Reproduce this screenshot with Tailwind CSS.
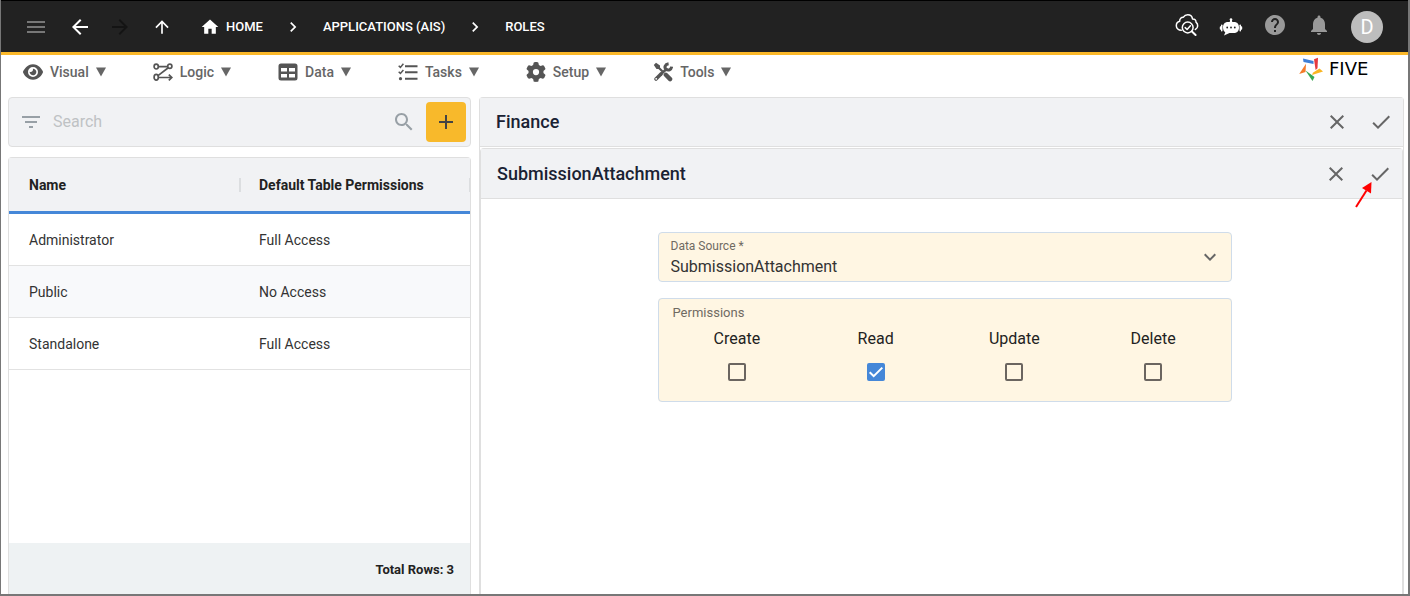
<!DOCTYPE html>
<html lang="en">
<head>
<meta charset="utf-8">
<meta name="viewport" content="width=device-width, initial-scale=1">
<title>Roles</title>
<script src="https://cdn.jsdelivr.net/npm/@tailwindcss/browser@4"></script>
</head>
<body class="bg-white font-['Roboto','Liberation_Sans',sans-serif] text-[#222]">
<div class="flex min-h-screen flex-col border-r-2 border-b-2 border-l border-[#777]">
  <header class="flex h-[55px] items-center border-t border-b-3 border-t-black border-b-[#fbb829] bg-[#222] pt-px pr-[25px] pl-[23px] text-[13px] font-medium text-white">
    <button aria-label="Menu" class="text-[#777]"><svg class="size-6" viewBox="0 0 24 24" fill="currentColor"><path d="M3 18h18v-2H3v2zm0-5h18v-2H3v2zm0-7v2h18V6H3z"/></svg></button>
    <button aria-label="Back" class="ml-5"><svg class="size-6" viewBox="0 0 24 24" fill="currentColor"><path d="M20 11H7.830l5.590-5.590L12 4l-8 8 8 8 1.410-1.410L7.830 13H20v-2z"/></svg></button>
    <button aria-label="Forward" disabled class="ml-4 text-[#141414]"><svg class="size-6" viewBox="0 0 24 24" fill="currentColor"><path d="M12 4l-1.410 1.410L16.170 11H4v2h12.170l-5.580 5.590L12 20l8-8z"/></svg></button>
    <button aria-label="Up" class="ml-5"><svg class="size-5" viewBox="0 0 24 24" fill="currentColor"><path d="M4 12l1.410 1.410L11 7.830V20h2V7.830l5.580 5.590L20 12l-8-8-8 8z"/></svg></button>
    <nav class="ml-7 flex items-center" aria-label="Breadcrumb">
      <a href="#" class="flex items-center gap-1.5"><svg class="size-5" viewBox="0 0 24 24" fill="currentColor"><path d="M10 20v-6h4v6h5v-8h3L12 3 2 12h3v8z"/></svg>HOME</a>
      <svg class="mx-5 size-5" viewBox="0 0 24 24" fill="currentColor"><path d="M10 6 8.590 7.410 13.170 12l-4.580 4.590L10 18l6-6z"/></svg>
      <a href="#">APPLICATIONS (AIS)</a>
      <svg class="mx-5 size-5" viewBox="0 0 24 24" fill="currentColor"><path d="M10 6 8.590 7.410 13.170 12l-4.580 4.590L10 18l6-6z"/></svg>
      <a href="#">ROLES</a>
    </nav>
    <div class="ml-auto flex items-center gap-5">
      <button aria-label="Inspect"><svg class="-mt-1 size-6" viewBox="0 0 24 24" fill="none" stroke="currentColor" stroke-width="1.500" stroke-linecap="round" stroke-linejoin="round"><path d="M6.300 17.300C3.500 17.300 1.300 15.300 1.300 12.700c0-2.300 1.400-3.900 3.400-4.400C4.400 5.600 6.400 4 8.400 4.200 9.400 2.600 11 1.800 12.700 1.800c2.700 0 4.500 1.700 4.800 4.100 2.200-.2 3.700 1.300 3.500 3.300 2.400 1.900 2.300 5.800-.7 7.300"/><circle cx="12.700" cy="14.500" r="5.400"/><path d="m10.200 14.600 1.900 1.900 3.300-3.800"/><path d="m16.900 18.500 3.700 3.500" stroke-width="2"/></svg></button>
      <button aria-label="Assistant"><svg class="size-6" viewBox="0 0 24 24" fill="currentColor"><path d="M12 3.200a1.300 1.300 0 0 1 .9 2.300l.4 1.500h1.700c3.300 0 5 2.200 5 5.500S18.300 18 15 18h-4.500L5 20.500l1.300-3.200C4.900 16.400 4 14.800 4 12.500 4 9.200 5.700 7 9 7h1.700l.4-1.500A1.300 1.300 0 0 1 12 3.200z"/><rect x="2" y="9.500" width="1.500" height="7" rx=".7"/><rect x="20.500" y="9.500" width="1.500" height="7" rx=".7"/><rect x=".8" y="11.200" width="1.800" height="3.600" rx=".7"/><rect x="21.400" y="11.200" width="1.800" height="3.600" rx=".7"/><g fill="#222"><circle cx="8.200" cy="12.500" r=".9"/><circle cx="12" cy="12.500" r=".9"/><circle cx="15.800" cy="12.500" r=".9"/></g></svg></button>
      <button aria-label="Help" class="text-[#999]"><svg class="-mt-1 size-6" viewBox="0 0 24 24" fill="currentColor"><path d="M12 2C6.480 2 2 6.480 2 12s4.480 10 10 10 10-4.480 10-10S17.520 2 12 2zm1 17h-2v-2h2v2zm2.070-7.750l-.9.920C13.450 12.900 13 13.500 13 15h-2v-.5c0-1.100.450-2.100 1.170-2.830l1.240-1.260c.370-.360.590-.860.590-1.410 0-1.100-.9-2-2-2s-2 .9-2 2H8c0-2.210 1.790-4 4-4s4 1.790 4 4c0 .880-.360 1.680-.930 2.250z"/></svg></button>
      <button aria-label="Notifications" class="text-[#999]"><svg class="-mt-1 size-6" viewBox="0 0 24 24" fill="currentColor"><path d="M12 22c1.100 0 2-.9 2-2h-4c0 1.100.890 2 2 2zm6-6v-5c0-3.070-1.640-5.640-4.500-6.320V4c0-.830-.670-1.500-1.500-1.500s-1.500.670-1.500 1.500v.680C7.630 5.360 6 7.920 6 11v5l-2 2v1h16v-1l-2-2z"/></svg></button>
      <button aria-label="Account" class="size-8 rounded-full bg-[#bdbdbd] text-xl font-normal">D</button>
    </div>
  </header>

  <div class="flex h-[42px] items-start pr-[19px] pl-[22px] text-[#666]">
    <nav class="flex h-[33px] items-center gap-[47px] text-sm font-medium" aria-label="Main">
      <button class="flex items-center gap-[7px]"><svg class="h-5 w-5 text-[#555]" viewBox="0 0 576 512" fill="currentColor"><path d="M288 32c-80.800 0-145.500 36.800-192.600 80.600C48.600 156 17.300 208 2.500 243.700c-3.300 7.900-3.300 16.700 0 24.600C17.300 304 48.600 356 95.400 399.400 142.500 443.200 207.200 480 288 480s145.500-36.800 192.600-80.600c46.800-43.500 78.100-95.400 93-131.100 3.300-7.900 3.300-16.700 0-24.600-14.900-35.700-46.200-87.700-93-131.100C433.500 68.800 368.800 32 288 32zM144 256a144 144 0 1 1 288 0 144 144 0 1 1-288 0zm144-64c0 35.300-28.700 64-64 64-7.100 0-13.900-1.200-20.300-3.300-5.500-1.800-11.900 1.600-11.700 7.400.3 6.900 1.300 13.800 3.200 20.700 13.700 51.200 66.400 81.600 117.600 67.900s81.600-66.400 67.900-117.600c-11.100-41.500-47.800-69.400-88.600-71.100-5.800-.2-9.200 6.100-7.400 11.700 2.100 6.400 3.300 13.200 3.300 20.300z"/></svg><span>Visual</span><svg class="h-2.5 w-2.5" viewBox="0 0 10 10" fill="currentColor"><path d="M0 .5h10L5 9.500z"/></svg></button>
      <button class="flex items-center gap-[7px]"><svg class="h-5 w-5 text-[#555]" viewBox="0 0 20 20" fill="none" stroke="currentColor" stroke-width="1.700"><ellipse cx="3.200" cy="4.600" rx="2.100" ry="2.400"/><circle cx="16.800" cy="4.200" r="2.100"/><ellipse cx="3.200" cy="15.300" rx="2.100" ry="2.900"/><path d="M5.300 4.600h9.300M15.300 5.800 5 13.600M5.500 15.500h12.500M15.800 12.600l3 2.900-3 2.900"/></svg><span>Logic</span><svg class="h-2.5 w-2.5" viewBox="0 0 10 10" fill="currentColor"><path d="M0 .5h10L5 9.500z"/></svg></button>
      <button class="flex items-center gap-[7px]"><svg class="h-5 w-5 text-[#555]" viewBox="0 0 20 20" fill="currentColor" fill-rule="evenodd"><path d="M3 1.500h14a2.500 2.500 0 0 1 2.500 2.500v12a2.500 2.500 0 0 1-2.500 2.500H3A2.500 2.500 0 0 1 .5 16V4A2.500 2.500 0 0 1 3 1.500zM3 6v3.500h6V6zM11 6v3.500h6V6zM3 12v3.500h6V12zM11 12v3.500h6V12z"/></svg><span>Data</span><svg class="h-2.5 w-2.5" viewBox="0 0 10 10" fill="currentColor"><path d="M0 .5h10L5 9.500z"/></svg></button>
      <button class="flex items-center gap-[7px]"><svg class="h-5 w-5 text-[#555]" viewBox="0 0 20 20" fill="none" stroke="currentColor" stroke-width="2"><path d="M7 4.200h12.500M7 10.300h12.500M7 16.700h12.500"/><path stroke-width="1.500" d="m.7 3.700 1.700 1.700 3-3.600M.7 9.800l1.700 1.700 3-3.600"/><circle cx="2.500" cy="16.700" r="1.600" fill="currentColor" stroke="none"/></svg><span>Tasks</span><svg class="h-2.5 w-2.5" viewBox="0 0 10 10" fill="currentColor"><path d="M0 .5h10L5 9.500z"/></svg></button>
      <button class="flex items-center gap-[7px]"><svg class="h-5 w-5 text-[#555]" viewBox="0 0 512 512" fill="currentColor"><path d="M495.900 166.600c3.200 8.700 .5 18.400-6.400 24.600l-43.300 39.400c1.100 8.300 1.700 16.800 1.700 25.400s-.6 17.100-1.700 25.400l43.300 39.400c6.900 6.200 9.600 15.900 6.400 24.600c-4.400 11.900-9.700 23.300-15.800 34.300l-4.700 8.100c-6.600 11-14 21.400-22.100 31.200c-5.900 7.200-15.700 9.600-24.500 6.800l-55.700-17.700c-13.400 10.300-28.200 18.900-44 25.400l-12.500 57.100c-2 9.100-9 16.300-18.200 17.800c-13.800 2.300-28 3.500-42.500 3.500s-28.700-1.200-42.500-3.500c-9.200-1.500-16.200-8.700-18.200-17.800l-12.500-57.100c-15.800-6.500-30.600-15.100-44-25.400L83.100 425.900c-8.800 2.800-18.600 .3-24.500-6.800c-8.100-9.800-15.500-20.200-22.100-31.200l-4.700-8.100c-6.100-11-11.400-22.400-15.800-34.300c-3.200-8.700-.5-18.400 6.400-24.600l43.300-39.400C64.600 273.100 64 264.600 64 256s.6-17.100 1.700-25.400L22.400 191.200c-6.900-6.200-9.600-15.900-6.400-24.600c4.400-11.900 9.700-23.300 15.800-34.300l4.700-8.100c6.600-11 14-21.400 22.100-31.200c5.900-7.200 15.700-9.600 24.500-6.800l55.700 17.700c13.400-10.300 28.200-18.900 44-25.400l12.500-57.100c2-9.100 9-16.300 18.200-17.800C227.300 1.200 241.500 0 256 0s28.700 1.200 42.500 3.500c9.200 1.500 16.200 8.700 18.200 17.800l12.500 57.100c15.800 6.500 30.600 15.100 44 25.400l55.700-17.700c8.800-2.800 18.600-.3 24.500 6.800c8.100 9.800 15.500 20.200 22.100 31.200l4.700 8.100c6.100 11 11.400 22.400 15.800 34.300zM256 336a80 80 0 1 0 0-160 80 80 0 1 0 0 160z"/></svg><span>Setup</span><svg class="h-2.5 w-2.5" viewBox="0 0 10 10" fill="currentColor"><path d="M0 .5h10L5 9.500z"/></svg></button>
      <button class="flex items-center gap-[7px]"><svg class="h-5 w-5 text-[#555]" viewBox="0 0 20 20"><path fill="currentColor" d="M.8 3 3 .8l4 2.700v2l3.300 3.200-1.500 1.500L5.500 7h-2z"/><path stroke="currentColor" stroke-width="4.400" stroke-linecap="round" d="m12.800 12.800 4.300 4.300"/><path stroke="currentColor" stroke-width="3.600" stroke-linecap="round" d="m3 17 5-5"/><path stroke="currentColor" stroke-width="2.400" d="m7 13 6.500-6"/><path fill="none" stroke="currentColor" stroke-width="3" d="M15.600 1.800c-3.600.5-4.700 3.700-2.500 5.400 2 1.900 5.200.5 5.500-2.500"/><circle cx="3.200" cy="16.800" r=".9" fill="#fff"/></svg><span>Tools</span><svg class="h-2.5 w-2.5" viewBox="0 0 10 10" fill="currentColor"><path d="M0 .5h10L5 9.500z"/></svg></button>
    </nav>
    <a href="#" class="ml-auto flex h-7 w-[90px] items-center gap-1.5 text-black"><svg class="size-6" viewBox="0 0 24 24"><path fill="#3f7fd6" d="M4 1.500 14.500 4v3L4.500 5z"/><path fill="#e5393f" d="m15 2.200 4-1.400-.5 10.500-1.900 1.700z"/><path fill="#f9b522" d="m24 14.500-3.500-3-6.700 4.300-.7 2.200z"/><path fill="#35a853" d="m6.500 13.500 9 6.500-2 4z"/><path fill="#f47b2a" d="M7 6.800 6.500 15 .2 17z"/></svg><span class="font-['DejaVu_Sans',sans-serif] text-lg leading-5">FIVE</span></a>
  </div>

  <main class="flex flex-1 gap-2 pr-1 pl-[7px]">
    <section class="flex w-[463px] shrink-0 flex-col gap-2.5">
      <div class="flex h-[50px] items-center rounded border border-[#dfdfdf] bg-[#f1f2f4] pr-1 pl-2.5 text-[#98a0a6]">
        <button aria-label="Filter"><svg class="size-6" viewBox="0 0 24 24" fill="currentColor"><path d="M10 18h4v-2h-4v2zM3 6v2h18V6H3zm3 7h12v-2H6v2z"/></svg></button>
        <input type="search" aria-label="Search" placeholder="Search" class="ml-2.5 min-w-0 flex-1 bg-transparent text-base text-[#222] outline-none placeholder:text-[#bfc2c4]">
        <button aria-label="Run search"><svg class="size-6" viewBox="0 0 24 24" fill="currentColor"><path d="M15.500 14h-.790l-.280-.270C15.410 12.590 16 11.110 16 9.500 16 5.910 13.090 3 9.500 3S3 5.910 3 9.500 5.910 16 9.500 16c1.610 0 3.090-.590 4.230-1.570l.270.280v.790l5 4.990L20.490 19l-4.990-5zm-6 0C7.010 14 5 11.990 5 9.500S7.010 5 9.500 5 14 7.010 14 9.500 11.990 14 9.500 14z"/></svg></button>
        <button aria-label="Add role" class="ml-2.5 grid size-10 place-items-center rounded bg-[#f8b92b] text-[#444]"><svg class="size-6" viewBox="0 0 24 24" fill="currentColor"><path d="M19 13h-6v6h-2v-6H5v-2h6V5h2v6h6v2z"/></svg></button>
      </div>
      <div class="flex flex-1 flex-col rounded-t border-x border-t border-[#dfdfdf]">
        <table class="w-full table-fixed border-separate border-spacing-0 text-left text-sm">
          <thead class="bg-[#f1f2f4]">
            <tr class="h-14">
              <th class="w-58 border-b-3 border-[#4587d8] pl-5 font-bold"><div class="flex items-center justify-between">Name<span class="h-3.5 w-0.5 bg-[#dcdee0]"></span></div></th>
              <th class="border-b-3 border-[#4587d8] pl-[18px] font-bold"><div class="flex items-center justify-between">Default Table Permissions<span class="h-3.5 w-px bg-[#dcdee0]"></span></div></th>
            </tr>
          </thead>
          <tbody class="text-[#333]">
            <tr class="h-13"><td class="border-b border-[#e2e2e2] pl-5">Administrator</td><td class="border-b border-[#e2e2e2] pl-[18px]">Full Access</td></tr>
            <tr class="h-13 bg-[#f8f9fb]"><td class="border-b border-[#e2e2e2] pl-5">Public</td><td class="border-b border-[#e2e2e2] pl-[18px]">No Access</td></tr>
            <tr class="h-13"><td class="border-b border-[#e2e2e2] pl-5">Standalone</td><td class="border-b border-[#e2e2e2] pl-[18px]">Full Access</td></tr>
          </tbody>
        </table>
        <div class="mt-auto flex h-[51px] items-center justify-end bg-[#eef2f3] pt-0.5 pr-4 text-[13px] font-bold">Total Rows: 3</div>
      </div>
    </section>

    <section class="flex min-w-0 flex-1 flex-col gap-px rounded-t border-x border-t border-[#dfdfdf]">
      <div class="flex h-[49px] items-center border-b border-[#dfdfdf] bg-[#f1f2f4] pr-2.5 pl-4 text-[#666]">
        <h2 class="text-lg font-medium text-[#1a2233]">Finance</h2>
        <button aria-label="Cancel Finance" class="ml-auto"><svg class="size-6" viewBox="0 0 24 24" fill="currentColor"><path d="M19 6.410 17.590 5 12 10.590 6.410 5 5 6.410 10.590 12 5 17.590 6.410 19 12 13.410 17.590 19 19 17.590 13.410 12z"/></svg></button>
        <button aria-label="Save Finance" class="ml-5"><svg class="size-6" viewBox="0 0 24 24" fill="currentColor"><path d="M9 16.170 4.830 12l-1.420 1.410L9 19 21 7l-1.410-1.410z"/></svg></button>
      </div>
      <div class="flex-1 rounded-t border-x border-t border-[#dfdfdf]">
        <div class="flex h-[50px] items-center border-b border-[#dfdfdf] bg-[#f1f2f4] pr-2.5 pl-4 text-[#666]">
          <h2 class="text-lg font-medium text-[#1a2233]">SubmissionAttachment</h2>
          <button aria-label="Cancel SubmissionAttachment" class="ml-auto"><svg class="size-6" viewBox="0 0 24 24" fill="currentColor"><path d="M19 6.410 17.590 5 12 10.590 6.410 5 5 6.410 10.590 12 5 17.590 6.410 19 12 13.410 17.590 19 19 17.590 13.410 12z"/></svg></button>
          <button aria-label="Save SubmissionAttachment" class="relative ml-5"><svg class="size-6" viewBox="0 0 24 24" fill="currentColor"><path d="M9 16.170 4.830 12l-1.420 1.410L9 19 21 7l-1.410-1.410z"/></svg>
            <svg class="absolute top-5 -left-3.5 h-7 w-5" viewBox="0 0 20 28" fill="#f00"><path d="M2 25 12.500 8.500" stroke="#f00" stroke-width="2"/><path d="M17.500 0 17 11.500 8 6z"/></svg></button>
        </div>
        <form class="mx-auto flex max-w-[580px] flex-col gap-4 pt-[33px] pl-1.5">
          <div class="relative h-[50px] rounded border border-[#cfdcea] bg-[#fff6e3]">
            <label for="source" class="absolute top-1.5 left-3 text-xs leading-[14px] text-[#6f6a62]">Data Source *</label>
            <select id="source" class="h-full w-full appearance-none bg-transparent pt-5 pl-3 text-base text-[#333] outline-none"><option>SubmissionAttachment</option></select>
            <svg class="pointer-events-none absolute top-3 right-[9px] size-6 text-[#666]" viewBox="0 0 24 24" fill="currentColor"><path d="M16.590 8.590 12 13.170 7.410 8.590 6 10l6 6 6-6z"/></svg>
          </div>
          <fieldset class="h-[104px] rounded border border-[#cfdcea] bg-[#fff6e3] pr-2 pl-[9px]">
            <div class="pt-1.5 pl-[5px] text-[13px] leading-4 text-[#6f6a62]">Permissions</div>
            <div class="mt-1.5 grid grid-cols-4 text-base">
              <label class="flex flex-col items-center gap-3">Create<input type="checkbox" class="size-[18px] appearance-none rounded-xs border-2 border-[#6b6560]"></label>
              <label class="relative flex flex-col items-center gap-3">Read<input type="checkbox" checked class="peer size-[18px] appearance-none rounded-xs border-2 border-[#6b6560] checked:border-[#4587d8] checked:bg-[#4587d8]"><svg class="pointer-events-none absolute bottom-0 hidden size-[18px] peer-checked:block" viewBox="0 0 18 18" fill="none" stroke="#fff" stroke-width="2"><path d="m2.700 9.200 4 4 8.600-8.600"/></svg></label>
              <label class="flex flex-col items-center gap-3">Update<input type="checkbox" class="size-[18px] appearance-none rounded-xs border-2 border-[#6b6560]"></label>
              <label class="flex flex-col items-center gap-3">Delete<input type="checkbox" class="size-[18px] appearance-none rounded-xs border-2 border-[#6b6560]"></label>
            </div>
          </fieldset>
        </form>
      </div>
    </section>
  </main>
</div>
</body>
</html>
